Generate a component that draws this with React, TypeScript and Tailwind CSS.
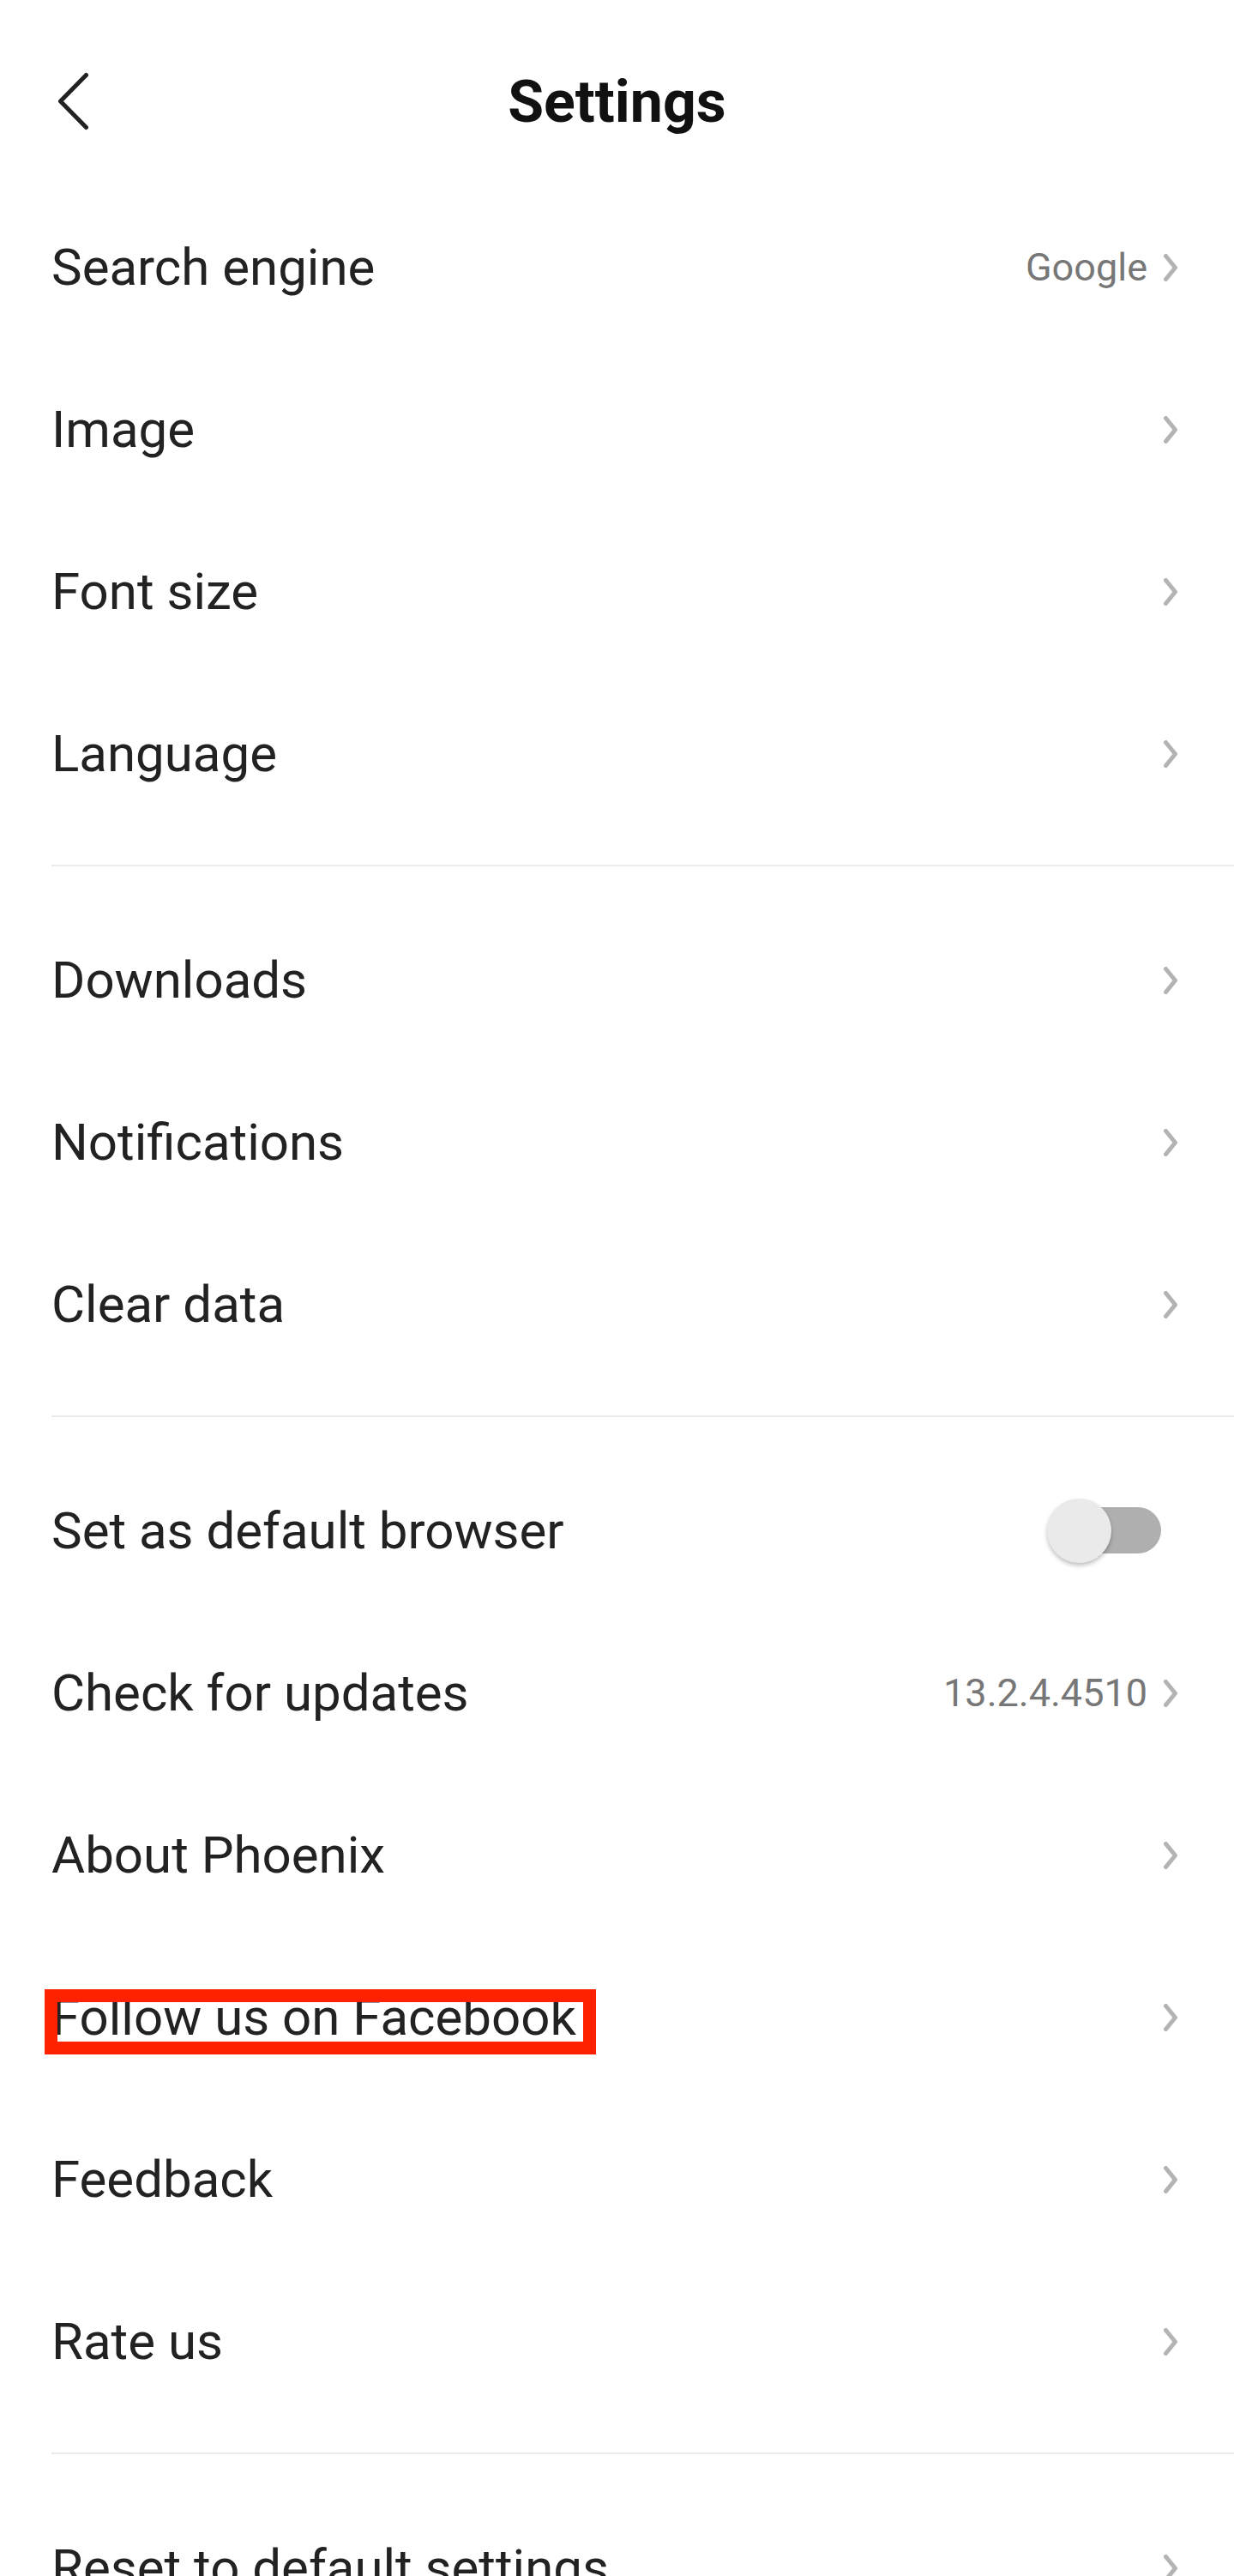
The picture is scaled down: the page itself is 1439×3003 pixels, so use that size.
import React from "react";

function Chevron() {
  return (
    <svg width="16" height="32" viewBox="0 0 16 32" fill="none" className="shrink-0">
      <path d="M2.5 2.5 L13.5 16 L2.5 29.5" stroke="#b3b3b3" strokeWidth="5" strokeLinecap="round" strokeLinejoin="round" />
    </svg>
  );
}

function Row({ label, value, highlight }: { label: string; value?: string; highlight?: boolean }) {
  return (
    <div className="relative flex h-[189px] items-center justify-between pl-[60px] pr-[66px]">
      <span className="text-[60px] leading-none text-[#222222]">{label}</span>
      <div className="flex items-center gap-[19px]">
        {value && <span className="text-[45px] leading-none text-[#777777]">{value}</span>}
        <Chevron />
      </div>
      {highlight && (
        <div className="pointer-events-none absolute left-[52px] top-[62px] h-[76px] w-[643px] border-[15px] border-[#ff2200]" />
      )}
    </div>
  );
}

function ToggleRow({ label }: { label: string }) {
  return (
    <div className="flex h-[189px] items-center justify-between pl-[60px] pr-[85px]">
      <span className="text-[60px] leading-none text-[#222222]">{label}</span>
      <div className="relative h-[75px] w-[133px]">
        <div className="absolute right-0 top-[10px] h-[54px] w-[118px] rounded-full bg-[#afafaf]" />
        <div className="absolute left-0 top-0 h-[75px] w-[75px] rounded-full bg-[#eaeaea] shadow-[0_3px_5px_rgba(0,0,0,0.25)]" />
      </div>
    </div>
  );
}

function Divider() {
  return (
    <div className="pb-[38px] pt-[35px] pl-[60px]">
      <div className="h-[2px] bg-[#ebebeb]" />
    </div>
  );
}

export default function App() {
  return (
    <div className="h-[3003px] w-full overflow-hidden bg-white font-['Roboto',sans-serif]">
      <div className="grid h-[217px] grid-cols-[1fr_auto_1fr] items-start pt-[84px]">
        <div className="flex h-[70px] items-center pl-[60px]">
          <svg width="50" height="70" viewBox="0 0 50 70" fill="none">
            <path d="M40.5 3.5 L10.5 34 L40.5 64.5" stroke="#222222" strokeWidth="5" strokeLinecap="round" strokeLinejoin="round" />
          </svg>
        </div>
        <h1 className="text-[68px] font-bold leading-[70px] text-[#111111]">Settings</h1>
        <div />
      </div>

      <Row label="Search engine" value="Google" />
      <Row label="Image" />
      <Row label="Font size" />
      <Row label="Language" />
      <Divider />
      <Row label="Downloads" />
      <Row label="Notifications" />
      <Row label="Clear data" />
      <Divider />
      <ToggleRow label="Set as default browser" />
      <Row label="Check for updates" value="13.2.4.4510" />
      <Row label="About Phoenix" />
      <Row label="Follow us on Facebook" highlight />
      <Row label="Feedback" />
      <Row label="Rate us" />
      <Divider />
      <Row label="Reset to default settings" />
    </div>
  );
}
